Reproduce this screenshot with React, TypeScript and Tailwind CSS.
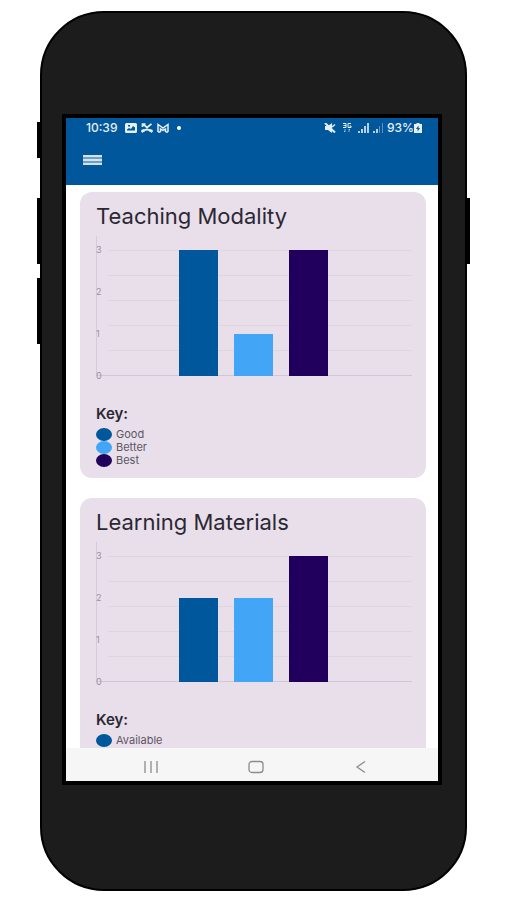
import React from "react";

interface ChartEntry {
  value: number;
  fill: string;
}

interface LegendEntry {
  label: string;
  dot: string;
}

interface ChartCardProps {
  title: string;
  data: ChartEntry[];
  legend: LegendEntry[];
}

const teachingData: ChartEntry[] = [
  { value: 3, fill: "#01579b" },
  { value: 1, fill: "#42a5f5" },
  { value: 3, fill: "#20005c" },
];

const materialsData: ChartEntry[] = [
  { value: 2, fill: "#01579b" },
  { value: 2, fill: "#42a5f5" },
  { value: 3, fill: "#20005c" },
];

const teachingLegend: LegendEntry[] = [
  { label: "Good", dot: "bg-[#01579b]" },
  { label: "Better", dot: "bg-[#42a5f5]" },
  { label: "Best", dot: "bg-[#20005c]" },
];

const materialsLegend: LegendEntry[] = [{ label: "Available", dot: "bg-[#01579b]" }];

const BASELINE = 140;
const UNIT = 42;

const BarChart: React.FC<{ title: string; data: ChartEntry[] }> = ({ title, data }) => (
  <svg viewBox="0 0 316 146" className="block w-full" role="img" aria-label={title}>
    <path d="M.5 0V140" stroke="#d3ccdb" strokeWidth="1" />
    {[14.5, 39.5, 64.5, 89.5, 114.5].map((y) => (
      <path key={y} d={`M12 ${y}H316`} stroke="#ddd5e2" strokeWidth="1" />
    ))}
    <path d="M1 139.5H316" stroke="#cfc8d7" strokeWidth="1" />
    {data.map((entry, i) => (
      <rect
        key={i}
        x={83 + i * 55}
        y={BASELINE - entry.value * UNIT}
        width="39"
        height={entry.value * UNIT}
        fill={entry.fill}
      />
    ))}
    {[0, 1, 2, 3].map((n) => (
      <text key={n} x="0" y={BASELINE - n * UNIT + 3} fontSize="9" fill="#98919f">
        {n}
      </text>
    ))}
  </svg>
);

const ChartCard: React.FC<ChartCardProps> = ({ title, data, legend }) => (
  <section className="min-h-[286px] shrink-0 rounded-xl bg-[#e8dfeb] pt-2.5 pr-3.5 pb-2.5 pl-4">
    <h2 className="mb-1.5 text-[22px] leading-7 whitespace-nowrap text-[#2b2833]">{title}</h2>
    <BarChart title={title} data={data} />
    <h3 className="mt-6 mb-1.5 text-[15px] leading-4 font-semibold text-[#2b2833]">Key:</h3>
    <ul>
      {legend.map((item) => (
        <li key={item.label} className="flex items-center gap-1 text-[11px] leading-[13px] text-[#5c5663]">
          <span className={`h-[13px] w-4 rounded-[50%] ${item.dot}`} />
          {item.label}
        </li>
      ))}
    </ul>
  </section>
);

const StatusBar = () => (
  <div className="flex h-5 items-center justify-between pr-4 pl-5 text-xs leading-4 font-medium text-[#e6eff6]">
    <div className="flex items-center gap-1">
      <span className="mr-1">10:39</span>
      {/* Picture */}
      <svg className="h-[10px] w-3" viewBox="0 0 12 10">
        <path
          fill="currentColor"
          fillRule="evenodd"
          d="M1.500 0H10.500Q12 0 12 1.500V8.500Q12 10 10.500 10H1.500Q0 10 0 8.500V1.500Q0 0 1.500 0ZM2 7.500H10V4.500L8 3L6 6L4 5L2 6.500ZM3 2V3.500H5V2Z"
        />
      </svg>
      {/* Missed call */}
      <svg className="h-[10px] w-3" viewBox="0 0 12 10" fill="none" stroke="currentColor">
        <path d="M2 .8L6 4.500L10.500 .8M1.500 4V1H4.500" strokeWidth="1.700" />
        <path d="M.8 9Q6 4 11.200 9" strokeWidth="2" />
        <path d="M.5 8.200L3.500 7.200M8.500 7.200L11.500 8.200" strokeWidth="2.600" />
      </svg>
      {/* Mail */}
      <svg className="h-[10px] w-3" viewBox="0 0 12 10" fill="none" stroke="currentColor" strokeWidth="1.500">
        <path d="M1 9V1.500L6 5L11 1.500V9M3.500 9V6L6 7.500L8.500 6V9M1 9H3.500M8.500 9H11" />
      </svg>
      <span className="ml-1 size-1 rounded-full bg-white" />
    </div>
    <div className="flex items-center">
      {/* Muted */}
      <svg className="mr-1.5 h-[10px] w-3" viewBox="0 0 12 10">
        <path fill="currentColor" d="M1 3H4L8 0V10L4 7H1Z" />
        <path d="M1 0L11 9.500" stroke="currentColor" strokeWidth="2" />
        <path d="M8 4L11 1.500" stroke="currentColor" strokeWidth="1.500" />
      </svg>
      {/* Mobile data */}
      <svg className="mr-1.5 h-[10px] w-2.5" viewBox="0 0 10 10" fill="none" stroke="currentColor">
        <path d="M1 .5H4V4.500H1M1.500 2.500H4M9 .5H6V4.500H9V3H7.500" />
        <path d="M3 6V9L2 8M7 9V6L8 7" opacity=".6" />
      </svg>
      <svg className="mr-1 h-[10px] w-[11px]" viewBox="0 0 11 10" fill="currentColor">
        <path d="M0 8H2V10H0ZM3 6H5V10H3ZM6 3H8V10H6ZM9 0H11V10H9Z" opacity=".8" />
      </svg>
      <svg className="mr-1 h-[10px] w-[10px]" viewBox="0 0 10 10" fill="currentColor">
        <path d="M0 8H2V10H0ZM3 6H5V10H3Z" opacity=".8" />
        <path d="M6 3H7V10H6ZM9 0H10V10H9Z" opacity=".4" />
      </svg>
      <span>93%</span>
      {/* Battery */}
      <svg className="h-[10px] w-2" viewBox="0 0 8 10">
        <path
          fill="currentColor"
          fillRule="evenodd"
          d="M2.500 0H5.500V1H8V10H0V1H2.500ZM4.500 2.500L2 6H3.600V8.500L6 5H4.500Z"
        />
      </svg>
    </div>
  </div>
);

const NavBar = () => (
  <nav className="grid h-[33px] shrink-0 grid-cols-3 items-center bg-[#f6f6f6] pt-1 pr-6 pl-8 text-[#8c8c8c]">
    <button className="flex justify-center" aria-label="Recent apps">
      <svg className="h-3.5 w-4" viewBox="0 0 16 14" fill="none" stroke="currentColor" strokeWidth="1.300">
        <path d="M2 1V13M8 1V13M14 1V13" />
      </svg>
    </button>
    <button className="flex justify-center" aria-label="Home">
      <svg className="h-3.5 w-4" viewBox="0 0 16 14" fill="none" stroke="currentColor" strokeWidth="1.300">
        <rect x="1" y="1.500" width="14" height="11" rx="3" />
      </svg>
    </button>
    <button className="flex justify-center" aria-label="Back">
      <svg className="h-3.5 w-4" viewBox="0 0 16 14" fill="none" stroke="currentColor" strokeWidth="1.300">
        <path d="M12 1.500L4 7L12 12.500" />
      </svg>
    </button>
  </nav>
);

const App: React.FC = () => {
  return (
    <div className="h-screen bg-white pt-[11px] pr-[39px] pb-[9px] pl-10 font-['Inter',sans-serif]">
      <div className="relative flex h-full flex-col rounded-[64px] border-2 border-black bg-[#1c1c1c] pt-[101px] pr-[23px] pb-[104px] pl-5">
        {/* Side buttons of the handset */}
        <span className="absolute top-[109px] -left-[5px] h-9 w-1 bg-black" />
        <span className="absolute top-[185px] -left-[5px] h-[66px] w-1 bg-black" />
        <span className="absolute top-[265px] -left-[5px] h-[66px] w-1 bg-black" />
        <span className="absolute top-[185px] -right-[5px] h-[66px] w-1 bg-black" />

        <div className="flex min-h-0 flex-1 flex-col border-4 border-black bg-white">
          <header className="h-[67px] shrink-0 bg-[#01579b]">
            <StatusBar />
            <button className="mt-4 ml-[17px] block" aria-label="Open menu">
              <svg className="h-3 w-5" viewBox="0 0 20 12" fill="none">
                <path d="M0 1H19V11H0Z" fill="#6f9ec6" />
                <path d="M0 2H19M0 6H19M0 10H19" stroke="#d3e2ee" strokeWidth="2" />
              </svg>
            </button>
          </header>
          <main className="flex min-h-0 flex-1 flex-col gap-5 overflow-hidden pt-[7px] pr-3 pl-3.5">
            <ChartCard title="Teaching Modality" data={teachingData} legend={teachingLegend} />
            <ChartCard title="Learning Materials" data={materialsData} legend={materialsLegend} />
          </main>
          <NavBar />
        </div>
      </div>
    </div>
  );
};

export default App;
